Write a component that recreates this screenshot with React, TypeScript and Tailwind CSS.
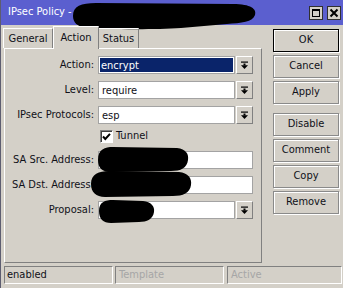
import React from "react";

const DropArrow = () => (
  <svg width="9" height="9" viewBox="0 0 9 9">
    <rect x="1" y="0.5" width="7" height="1.2" fill="#000" />
    <rect x="3.5" y="2.5" width="2" height="2" fill="#000" />
    <polygon points="1,4.3 8,4.3 4.5,8" fill="#000" />
  </svg>
);

const DropBtn = () => (
  <div className="ml-[1px] w-[17px] h-[18px] flex items-center justify-center bg-[#d4d0c8] border border-t-white border-l-white border-b-[#808080] border-r-[#808080]">
    <DropArrow />
  </div>
);

const Row = ({ label, children }: { label: string; children: React.ReactNode }) => (
  <div className="flex items-center h-[18px]">
    <div className="w-[89px] text-right whitespace-nowrap">{label}</div>
    <div className="ml-[4px] flex items-center">{children}</div>
  </div>
);

const Field = ({ value, w }: { value?: string; w: string }) => (
  <div className={`${w} h-[18px] bg-white border border-[#a3a3a3] flex items-center pl-[3px] leading-none`}>
    {value}
  </div>
);

const Btn = ({ label, def, cls }: { label: string; def?: boolean; cls?: string }) => (
  <div
    className={`h-[23px] w-[66px] flex items-center justify-center border ${
      def ? "border-black" : "border-[#8a8a8a]"
    } shadow-[inset_1px_1px_0_#ffffff,1px_1px_0_#ffffff] ${cls ?? ""}`}
  >
    {label}
  </div>
);

export default function App() {
  return (
    <div className="relative w-[343px] h-[288px] bg-[#d4d0c8] overflow-hidden text-[11px] text-[#101018] font-['DejaVu_Sans_Condensed','DejaVu_Sans',sans-serif] border-l border-[#5d5d70]">
      {/* title bar */}
      <div className="h-[25px] bg-[#5b5fcf] flex items-center pl-[7px] pr-[2px]">
        <span className="text-white text-[11px]">IPsec Policy -</span>
        <div className="ml-auto flex gap-[4px]">
          <div className="w-[14px] h-[14px] bg-[#d4d0c8] border border-[#303030] flex items-center justify-center">
            <svg width="10" height="10" viewBox="0 0 10 10">
              <rect x="1.5" y="1.5" width="7" height="7" fill="none" stroke="#000" strokeWidth="1" />
              <rect x="1" y="1" width="8" height="2" fill="#000" />
            </svg>
          </div>
          <div className="w-[14px] h-[14px] bg-[#d4d0c8] border border-[#303030] flex items-center justify-center">
            <svg width="10" height="10" viewBox="0 0 10 10">
              <path d="M1.5 1.5 L8.5 8.5 M8.5 1.5 L1.5 8.5" stroke="#000" strokeWidth="2" />
            </svg>
          </div>
        </div>
      </div>

      {/* body */}
      <div className="flex">
        <div className="ml-[2px] w-[259px]">
          {/* tabs */}
          <div className="h-[23px] flex items-end relative z-10">
            <div className="w-[50px] h-[20px] pt-[1px] flex items-center justify-center border-t border-l border-r border-t-white border-l-white border-r-[#808080]">
              General
            </div>
            <div className="w-[46px] h-[23px] -mb-[1px] flex items-center justify-center border-t border-l border-r border-t-white border-l-white border-r-[#808080] bg-[#d4d0c8]">
              Action
            </div>
            <div className="w-[40px] h-[20px] pt-[1px] flex items-center justify-center border-t border-r border-t-white border-r-[#808080]">
              Status
            </div>
          </div>
          {/* panel */}
          <div className="ml-[1px] w-[258px] h-[215px] border border-t-white border-l-white border-b-[#808080] border-r-[#808080] pt-[7px] flex flex-col">
            <Row label="Action:">
              <div className="w-[137px] h-[18px] border border-[#a3a3a3] bg-white p-[1px]">
                <div className="w-full h-full bg-[#0a246a] text-white flex items-center pl-[1px] leading-none">
                  encrypt
                </div>
              </div>
              <DropBtn />
            </Row>
            <div className="mt-[7px]">
              <Row label="Level:">
                <Field value="require" w="w-[137px]" />
                <DropBtn />
              </Row>
            </div>
            <div className="mt-[7px]">
              <Row label="IPsec Protocols:">
                <Field value="esp" w="w-[137px]" />
                <DropBtn />
              </Row>
            </div>
            <div className="mt-[5px] h-[14px] flex items-center pl-[95px]">
              <div className="w-[13px] h-[13px] bg-white border border-t-[#808080] border-l-[#808080] border-b-white border-r-white shadow-[inset_1px_1px_0_#404040] flex items-center justify-center">
                <svg width="9" height="9" viewBox="0 0 9 9">
                  <polyline points="1,4.5 3.3,7 8,1.8" fill="none" stroke="#000" strokeWidth="2" />
                </svg>
              </div>
              <span className="ml-[3px]">Tunnel</span>
            </div>
            <div className="mt-[8px]">
              <Row label="SA Src. Address:">
                <Field w="w-[155px]" />
              </Row>
            </div>
            <div className="mt-[7px]">
              <Row label="SA Dst. Address:">
                <Field w="w-[155px]" />
              </Row>
            </div>
            <div className="mt-[7px]">
              <Row label="Proposal:">
                <Field w="w-[137px]" />
                <DropBtn />
              </Row>
            </div>
          </div>
        </div>

        {/* buttons */}
        <div className="ml-[11px] pt-[4px] flex flex-col">
          <Btn label="OK" def />
          <Btn label="Cancel" cls="mt-[3px]" />
          <Btn label="Apply" cls="mt-[3px]" />
          <Btn label="Disable" cls="mt-[9px]" />
          <Btn label="Comment" cls="mt-[3px]" />
          <Btn label="Copy" cls="mt-[3px]" />
          <Btn label="Remove" cls="mt-[3px]" />
        </div>
      </div>

      {/* status bar */}
      <div className="mt-[3px] ml-[3px] flex gap-[2px]">
        <div className="w-[109px] h-[18px] border border-t-[#808080] border-l-[#808080] border-b-white border-r-white flex items-center pl-[2px]">
          enabled
        </div>
        <div className="w-[109px] h-[18px] border border-t-[#808080] border-l-[#808080] border-b-white border-r-white flex items-center pl-[3px] text-[#a6a6a6]">
          Template
        </div>
        <div className="ml-[1px] w-[115px] h-[18px] border border-t-[#808080] border-l-[#808080] border-b-white border-r-white flex items-center pl-[3px] text-[#a6a6a6]">
          Active
        </div>
      </div>

      {/* redactions */}
      <svg className="absolute left-0 top-0 pointer-events-none" width="343" height="288" viewBox="0 0 343 288">
        <path
          d="M72 16 C72 6 80 3 95 3 L232 4 C250 4 256 9 254 15 C252 22 240 23 226 24 L180 28 C150 30 100 29 86 28 C76 27 72 22 72 16 Z"
          fill="#000"
        />
        <path d="M97 160 C97 149 104 147 112 147 L176 148 C185 149 188 154 187 160 C186 168 180 171 170 171 L110 172 C101 172 97 168 97 160 Z" fill="#000" />
        <path d="M90 184 C90 174 98 171 108 171 L178 172 C187 173 191 178 190 185 C189 193 182 196 172 196 L104 197 C95 197 90 192 90 184 Z" fill="#000" />
        <path d="M98 211 C98 202 104 200 112 200 L142 201 C150 202 154 206 153 212 C152 219 146 222 138 222 L110 223 C102 223 98 219 98 211 Z" fill="#000" />
      </svg>
    </div>
  );
}
